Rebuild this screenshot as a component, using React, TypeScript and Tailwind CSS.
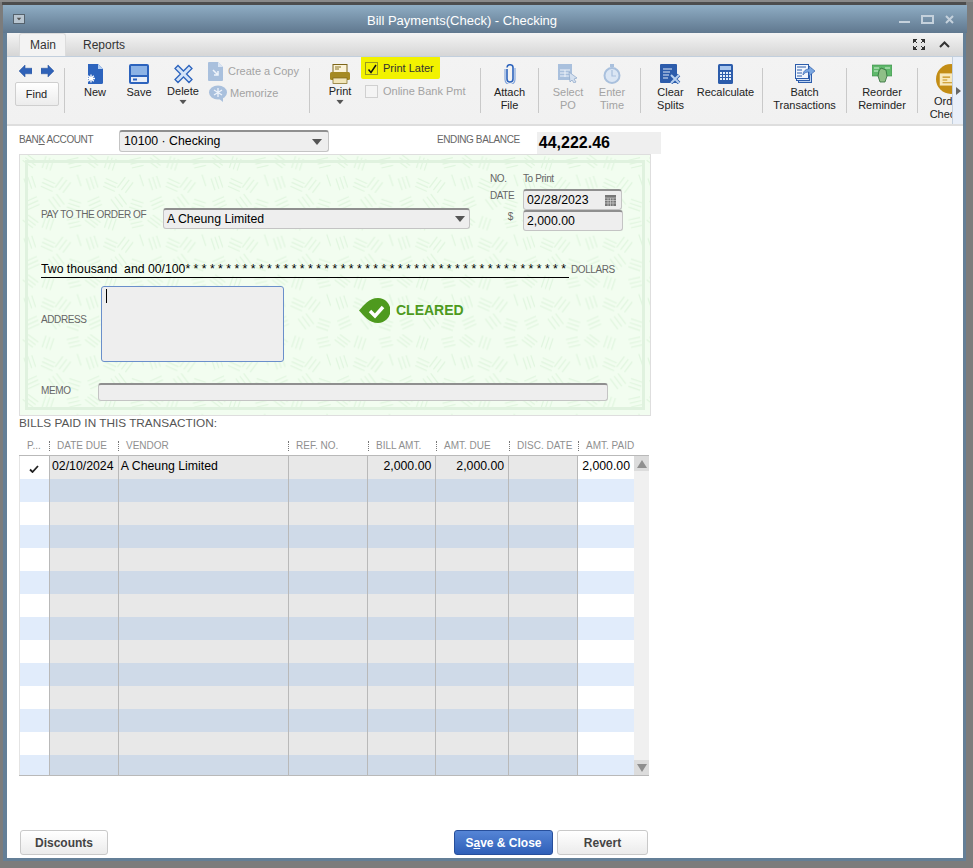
import type { ReactNode } from "react"

const font = "font-['Liberation_Sans',Arial,sans-serif]"

const Caret = ({ className = "" }: { className?: string }) => (
  <svg width="10" height="6" viewBox="0 0 10 6" className={className}>
    <path d="M0 0h10L5 6z" fill="#555" />
  </svg>
)

const NavArrow = ({ dir }: { dir: "left" | "right" }) => (
  <svg width="13" height="12" viewBox="0 0 14 13">
    <path
      d={dir === "left" ? "M0 6.5 6.5 0v3.5H14v6H6.5V13z" : "M14 6.5 7.5 0v3.5H0v6h7.5V13z"}
      fill="#2f62b8"
      stroke="#1d4a96"
      strokeWidth=".5"
    />
  </svg>
)

const NewIcon = () => (
  <svg width="18" height="20" viewBox="0 0 18 20">
    <path d="M2 0h10l5 5v13.500a1.500 1.500 0 0 1-1.500 1.500H2z" fill="#2c63bd" />
    <path d="M12 0l5 5h-5z" fill="#b5cff1" />
    <path d="M5 10.500v8M1 14.500h8M2.200 11.700l5.600 5.600M7.800 11.700l-5.600 5.600" stroke="#fff" strokeWidth="1.300" />
  </svg>
)

const SaveIcon = () => (
  <svg width="20" height="20" viewBox="0 0 20 20">
    <rect width="20" height="20" rx="2" fill="#2c63bd" />
    <rect x="2" y="2" width="16" height="9" fill="#8cb3e6" />
    <rect x="2" y="13" width="16" height="5" fill="#e8eef8" />
    <rect x="4" y="14.500" width="4" height="2" fill="#2c63bd" />
  </svg>
)

const DeleteIcon = () => (
  <svg width="21" height="20" viewBox="0 0 20 20">
    <path
      d="M1.500 4.500 4.500 1.500 10 7 15.500 1.500 18.500 4.500 13 10 18.500 15.500 15.500 18.500 10 13 4.500 18.500 1.500 15.500 7 10z"
      fill="#d3e3f8"
      stroke="#2c63bd"
      strokeWidth="1.300"
    />
  </svg>
)

const CopyIcon = () => (
  <svg width="16" height="19" viewBox="0 0 16 19">
    <path d="M1 0h9l5 5v13a1 1 0 0 1-1 1H1a1 1 0 0 1-1-1V1a1 1 0 0 1 1-1z" fill="#a9c0dd" />
    <path d="M10 0l5 5h-5z" fill="#dbe6f4" />
    <path d="M5 8l5 5M10 9v4H6" stroke="#eef3fa" strokeWidth="1.500" fill="none" />
  </svg>
)

const MemorizeIcon = () => (
  <svg width="18" height="17" viewBox="0 0 18 17">
    <ellipse cx="9" cy="7.500" rx="9" ry="7" fill="#a9c0dd" />
    <path d="M9 13l5 4v-5z" fill="#a9c0dd" />
    <path d="M9 3v9M5 5l8 5M13 5l-8 5" stroke="#eef3fa" strokeWidth="1.300" />
  </svg>
)

const PrintIcon = () => (
  <svg width="20" height="20" viewBox="0 0 20 20">
    <rect x="3" y="0.500" width="14" height="8" fill="#fbf3d8" stroke="#7d6518" />
    <path d="M5 3h6M5 5h4" stroke="#8a7427" />
    <rect x="0" y="8" width="20" height="8" rx="1.500" fill="#a58a22" />
    <rect x="3" y="14" width="14" height="5.500" fill="#f2e6ba" stroke="#7d6518" strokeWidth=".7" />
  </svg>
)

const ClipIcon = () => (
  <svg width="12" height="20" viewBox="0 0 12 20">
    <path d="M3 5v10a3 3 0 0 0 6 0V4a3 3 0 0 0-6-.5" fill="none" stroke="#2c63bd" strokeWidth="1.600" />
    <path d="M1 5v10.500a5 5 0 0 0 10 0V4" fill="none" stroke="#7ba0da" strokeWidth="1.100" />
  </svg>
)

const SelectPoIcon = () => (
  <svg width="20" height="19" viewBox="0 0 20 19">
    <rect width="14" height="16" fill="#a9c0dd" />
    <path d="M2 6h10M2 9h10M2 12h10M7 6v7" stroke="#eef3fa" />
    <path d="M11 8l8 6-3 1 2 3-2 1-2-3-2 2z" fill="#d5e1f0" stroke="#8aa5c7" strokeWidth=".7" />
  </svg>
)

const EnterTimeIcon = () => (
  <svg width="18" height="20" viewBox="0 0 18 20">
    <rect x="7" y="0" width="4" height="3" fill="#a9c0dd" />
    <circle cx="9" cy="11.500" r="7.500" fill="#dbe6f4" stroke="#a9c0dd" strokeWidth="2" />
    <path d="M9 6v6h4" stroke="#a9c0dd" strokeWidth="1.200" fill="none" />
  </svg>
)

const ClearSplitsIcon = () => (
  <svg width="21" height="20" viewBox="0 0 21 20">
    <rect width="17" height="19" rx="1" fill="#2c5cab" />
    <path d="M3 5h9M3 8h7M3 11h6M3 14h5" stroke="#dde8f7" strokeWidth="1.200" />
    <path d="M11 11l8 8M19 11l-8 8" stroke="#2c5cab" strokeWidth="3.600" />
    <path d="M11 11l8 8M19 11l-8 8" stroke="#b7d0ef" strokeWidth="2" />
  </svg>
)

const CalcIcon = () => (
  <svg width="15" height="20" viewBox="0 0 15 20">
    <rect width="15" height="20" rx="1.500" fill="#2c5cab" />
    <rect x="2" y="2" width="11" height="4" fill="#a8c6ee" />
    <path
      d="M2 8h2v2H2zM5 8h2v2H5zM8 8h2v2H8zM11 8h2v2h-2zM2 11h2v2H2zM5 11h2v2H5zM8 11h2v2H8zM11 11h2v2h-2zM2 14h2v2H2zM5 14h2v2H5zM8 14h2v2H8zM11 14h2v2h-2z"
      fill="#e3edf9"
    />
  </svg>
)

const BatchIcon = () => (
  <svg width="20" height="19" viewBox="0 0 20 19">
    <rect x="3.500" y="4.500" width="13" height="14" fill="#bcd2ef" stroke="#2c5cab" />
    <rect x="1.500" y="2.500" width="13" height="14" fill="#dbe7f7" stroke="#2c5cab" />
    <rect x="0.500" y="0.500" width="13" height="14" fill="#f2f6fc" stroke="#2c5cab" />
    <path d="M2 3h9M2 6h5M2 9h5M2 12h5" stroke="#2c5cab" />
    <path d="M8 11c0-4 3-6 6-6V2l6 5-6 5V8c-3 0-5 1-6 3z" fill="#7ba7e0" stroke="#2c5cab" strokeWidth=".6" />
  </svg>
)

const ReorderIcon = () => (
  <svg width="20" height="19" viewBox="0 0 20 19">
    <rect x="0" y="1" width="20" height="11" fill="#5fb86b" stroke="#3b8a48" strokeWidth=".6" />
    <path d="M2 4h5M2 7h4M13 4h5" stroke="#d3f0d6" />
    <path d="M7 7l2-3 5 2 1 6-2 6H8L6 12z" fill="#8fbf87" stroke="#2e6d38" strokeWidth=".8" />
  </svg>
)

const OrderIcon = () => (
  <svg width="30" height="30" viewBox="0 0 32 32">
    <circle cx="16" cy="16" r="16" fill="#c38d15" />
    <rect x="4" y="10" width="24" height="13" fill="#f8e9bd" />
    <path d="M7 14h8M7 17h5M17 17h11M7 20h16" stroke="#c38d15" strokeWidth="1.200" />
  </svg>
)

const ToolButton = ({
  icon,
  lines,
  width,
  disabled,
  caret,
}: {
  icon: ReactNode
  lines: string[]
  width: string
  disabled?: boolean
  caret?: boolean
}) => (
  <div className={`${width} shrink-0 flex flex-col items-center pt-[6px]`}>
    <div className="h-[21px] flex items-center justify-center">{icon}</div>
    <div
      className={`${caret ? "mt-[1px]" : "mt-[2px]"} text-center text-[11px] leading-[13px] whitespace-nowrap ${
        disabled ? "text-[#a3a3a3]" : "text-[#222]"
      }`}
    >
      {lines.map((l) => (
        <div key={l}>{l}</div>
      ))}
    </div>
    {caret && <Caret className="mt-[1px] scale-75" />}
  </div>
)

const Sep = () => <div className="w-px h-[45px] mt-[11px] bg-[#c9c9c9] shrink-0" />

const hatch = [
  "M2 4l8 6", "M4 2l8 6", "M6 0l8 6", "M20 1l-3 9", "M23 2l-3 9", "M26 3l-3 9",
  "M36 4l9-2", "M37 7l9-2", "M38 10l9-2", "M3 18l3 9", "M6 17l3 9", "M9 16l3 9",
  "M18 18l9 4", "M17 21l9 4", "M16 24l9 4", "M33 17l-6 8", "M36 19l-6 8", "M39 21l-6 8",
  "M44 15l3 9", "M4 36l9-4", "M5 39l9-4", "M6 42l9-4", "M22 34l6 8", "M25 32l6 8",
  "M28 30l6 8", "M38 34l9 3", "M37 37l9 3", "M36 40l9 3",
]

const CheckPattern = () => (
  <svg className="absolute inset-0 w-full h-full" aria-hidden="true">
    <defs>
      <pattern id="chk" width="48" height="46" patternUnits="userSpaceOnUse" patternTransform="scale(1.3)">
        {hatch.map((d) => (
          <path key={d} d={d} stroke="#e0f5de" strokeWidth=".9" fill="none" />
        ))}
      </pattern>
    </defs>
    <rect width="100%" height="100%" fill="#f2fdf0" />
    <rect width="100%" height="100%" fill="url(#chk)" />
  </svg>
)

const fieldCls =
  "rounded-[3px] bg-[#eeeeee] border border-[#c4c4c4] border-t-[#8f8f8f] border-t-2 flex items-center text-[12.3px] text-black"

const Label = ({ children, className = "" }: { children: ReactNode; className?: string }) => (
  <div className={`text-[10px] tracking-[-0.4px] leading-[12px] text-[#666] whitespace-nowrap ${className}`}>{children}</div>
)

const cols = [
  { w: "w-[30px]", head: "P...", pad: "pl-[8px]" },
  { w: "w-[69px]", head: "DATE DUE", pad: "pl-[7px]" },
  { w: "w-[170px]", head: "VENDOR", pad: "pl-[7px]" },
  { w: "w-[80px]", head: "REF. NO.", pad: "pl-[7px]" },
  { w: "w-[68px]", head: "BILL AMT.", pad: "pl-[7px]" },
  { w: "w-[73px]", head: "AMT. DUE", pad: "pl-[7px]" },
  { w: "w-[69px]", head: "DISC. DATE", pad: "pl-[7px]" },
  { w: "w-[56px]", head: "AMT. PAID", pad: "pl-[7px]" },
]

const rows = Array.from({ length: 14 }, (_, i) => i)

const GridRow = ({ i }: { i: number }) => {
  const odd = i % 2 === 1
  const side = odd ? "bg-[#e1ecfb]" : "bg-white"
  const mid = odd ? "bg-[#cfdae8]" : "bg-[#e8e8e8]"
  const first = i === 0
  return (
    <div className="flex h-[23px] shrink-0 text-[12.3px] leading-[18px] text-black">
      <div className={`w-[30px] border-r border-[#b9b9b9] flex items-center justify-center ${side}`}>
        {first && (
          <svg width="10" height="8" viewBox="0 0 10 8" className="mt-[3px]">
            <path d="M1 4.500 3.500 7 9 1" fill="none" stroke="#222" strokeWidth="1.800" />
          </svg>
        )}
      </div>
      <div className={`w-[69px] border-r border-[#b9b9b9] pl-[2px] pt-[1px] ${mid}`}>{first && "02/10/2024"}</div>
      <div className={`w-[170px] border-r border-[#b9b9b9] pl-[2px] pt-[1px] ${mid}`}>{first && "A Cheung Limited"}</div>
      <div className={`w-[80px] border-r border-[#b9b9b9] ${mid}`} />
      <div className={`w-[68px] border-r border-[#b9b9b9] pr-[4px] pt-[1px] text-right ${mid}`}>{first && "2,000.00"}</div>
      <div className={`w-[73px] border-r border-[#b9b9b9] pr-[4px] pt-[1px] text-right ${mid}`}>{first && "2,000.00"}</div>
      <div className={`w-[69px] border-r border-[#b9b9b9] ${mid}`} />
      <div className={`w-[56px] pr-[4px] pt-[1px] text-right ${side}`}>{first && "2,000.00"}</div>
    </div>
  )
}

const stars = "* ".repeat(46).trim()

export default function App() {
  return (
    <div className={`${font} w-[973px] h-[868px] bg-[#7c7c7c] overflow-hidden`}>
      <div className="h-[2px] bg-[#8a8a8a]" />
      <div className="h-[3px] bg-[#4d4d4d] ml-[2px] mr-[7px]" />
      <div className="ml-[3px] mr-[7px] h-[856px] px-[4px] pr-[3px] pb-[3px] bg-[#647f97] flex flex-col">
        <div className="h-[28px] -mx-[4px] px-[10px] shrink-0 bg-gradient-to-b from-[#8fadc4] to-[#60788f] flex items-center">
          <div className="w-[12px] h-[10px] bg-[#b8c5d0] border border-[#55626d] flex items-center justify-center">
            <Caret className="scale-50" />
          </div>
          <div className="flex-1 text-center text-[13px] text-white pl-[2px] pt-[3px] -ml-[2px]">
            Bill Payments(Check) - Checking
          </div>
          <div className="flex items-center gap-[11px] mr-[3px]">
            <div className="w-[11px] h-[2px] mt-[6px] bg-[#c5d1dc]" />
            <div className="w-[13px] h-[9px] border-2 border-[#c5d1dc]" />
            <svg width="9" height="9" viewBox="0 0 9 9">
              <path d="M1 1l7 7M8 1 1 8" stroke="#c5d1dc" strokeWidth="2" />
            </svg>
          </div>
        </div>

        <div className="flex-1 bg-white flex flex-col min-h-0">
          <div className="h-[24px] shrink-0 bg-gradient-to-b from-[#f4f4f4] to-[#d6d6d6] border-b border-[#c2cfdd] flex items-end pl-[12px] text-[12px] text-[#333]">
            <div className="w-[47px] h-[23px] bg-[#f3f3f3] border border-b-0 border-[#dcdcdc] rounded-t-[3px] flex items-center justify-center pl-[1px]">
              Main
            </div>
            <div className="ml-[17px] h-[23px] flex items-center">Reports</div>
            <div className="ml-auto mr-[13px] h-[23px] flex items-center gap-[14px]">
              <svg width="12" height="11" viewBox="0 0 12 11">
                <path d="M0 0h4L0 4zM12 0H8l4 4zM0 11h4L0 7zM12 11H8l4-4zM2 2l2 2M10 2 8 4M2 9l2-2M10 9 8 7" fill="#333" stroke="#333" />
              </svg>
              <svg width="11" height="7" viewBox="0 0 11 7">
                <path d="M1 6l4.500-4.500L10 6" fill="none" stroke="#333" strokeWidth="2" />
              </svg>
            </div>
          </div>

          <div className="h-[69px] shrink-0 bg-gradient-to-b from-[#f3f3f3] to-[#f1f1f1] border-b-2 border-[#dedede] flex relative overflow-hidden">
            <div className="w-[57px] shrink-0 flex flex-col items-center pt-[8px] pl-[2px]">
              <div className="flex gap-[9px] pr-[1px]">
                <NavArrow dir="left" />
                <NavArrow dir="right" />
              </div>
              <div className="mt-[5px] w-[44px] h-[24px] bg-gradient-to-b from-white to-[#ececec] border border-[#cfcfcf] rounded-[2px] flex items-center justify-center text-[11px] text-[#222]">
                Find
              </div>
            </div>
            <Sep />
            <ToolButton icon={<NewIcon />} lines={["New"]} width="w-[44px] ml-[8px]" />
            <ToolButton icon={<SaveIcon />} lines={["Save"]} width="w-[44px]" />
            <ToolButton icon={<DeleteIcon />} lines={["Delete"]} width="w-[44px]" caret />
            <div className="w-[104px] shrink-0 pt-[4px] pl-[3px] text-[11px] text-[#a3a3a3] flex flex-col gap-[2px]">
              <div className="flex items-center gap-[4px] h-[20px]">
                <CopyIcon />
                Create a Copy
              </div>
              <div className="flex items-center gap-[3px] h-[20px] pl-[1px]">
                <MemorizeIcon />
                Memorize
              </div>
            </div>
            <Sep />
            <ToolButton icon={<PrintIcon />} lines={["Print"]} width="w-[60px]" caret />
            <div className="w-[110px] shrink-0 pt-[2px] flex flex-col text-[11px]">
              <div className="w-[79px] h-[23px] -ml-[9px] pl-[4px] pt-[2px] bg-[#f2f200] rounded-[2px] flex items-center gap-[5px] text-[#333] mt-[-3px] mb-[1px]">
                <span className="w-[13px] h-[13px] border border-[#9a9a20] flex items-center justify-center">
                  <svg width="10" height="10" viewBox="0 0 10 10">
                    <path d="M1.500 5.500 4 8.500 9 1" fill="none" stroke="#111" strokeWidth="1.500" />
                  </svg>
                </span>
                Print Later
              </div>
              <div className="mt-[3px] -ml-[5px] flex items-center gap-[5px] text-[#a3a3a3]">
                <span className="w-[13px] h-[13px] border border-[#d0d0d0] bg-[#f4f4f4]" />
                Online Bank Pmt
              </div>
            </div>
            <Sep />
            <ToolButton icon={<ClipIcon />} lines={["Attach", "File"]} width="w-[57px]" />
            <Sep />
            <ToolButton icon={<SelectPoIcon />} lines={["Select", "PO"]} width="w-[58px]" disabled />
            <ToolButton icon={<EnterTimeIcon />} lines={["Enter", "Time"]} width="w-[30px] mr-[13px]" disabled />
            <Sep />
            <ToolButton icon={<ClearSplitsIcon />} lines={["Clear", "Splits"]} width="w-[59px]" />
            <ToolButton icon={<CalcIcon />} lines={["Recalculate"]} width="w-[51px] mr-[11px]" />
            <Sep />
            <ToolButton icon={<BatchIcon />} lines={["Batch", "Transactions"]} width="w-[83px]" />
            <Sep />
            <ToolButton icon={<ReorderIcon />} lines={["Reorder", "Reminder"]} width="w-[70px]" />
            <Sep />
            <div className="flex flex-col items-center pt-[7px] w-[60px] shrink-0 text-[11px] leading-[13px] text-[#222] text-center">
              <div className="ml-[6px] h-[30px]">
                <OrderIcon />
              </div>
              <div className="mt-[1px]">Order</div>
              <div>Checks</div>
            </div>
            <div className="absolute right-0 top-0 bottom-[0px] w-[11px] bg-[#e9eff9] border-l border-[#c2cfdd] flex items-center justify-center">
              <svg width="5" height="8" viewBox="0 0 5 8">
                <path d="M0 0l5 4-5 4z" fill="#666" />
              </svg>
            </div>
          </div>

          <div className="flex-1 flex flex-col pl-[12px] min-h-0">
            <div className="h-[28px] shrink-0 flex items-start">
              <Label className="w-[100px] mt-[8px]">
                BAN<span className="underline">K</span> ACCOUNT
              </Label>
              <div className={`${fieldCls} w-[210px] h-[22px] mt-[4px] pl-[4px] justify-between pr-[6px]`}>
                10100 · Checking
                <Caret />
              </div>
              <Label className="ml-[108px] mt-[8px]">ENDING BALANCE</Label>
              <div className="ml-[17px] mt-[6px] w-[124px] h-[22px] bg-[#efefef] pl-[2px] text-[16px] leading-[22px] font-bold text-black">
                44,222.46
              </div>
            </div>

            <div className="w-[632px] h-[262px] shrink-0 border border-[#dedede] relative p-[5px]">
              <CheckPattern />
              <div className="relative h-full border-[3px] border-[#e0f2df] pl-[13px] pt-[10px]">
                <div className="flex h-[67px]">
                  <div className="flex items-center w-[122px] pt-[17px]">
                    <Label>PAY TO THE ORDER OF</Label>
                  </div>
                  <div className="w-[307px] mt-[35px] h-[21px]">
                    <div className={`${fieldCls} h-[21px] pl-[3px] pr-[4px] justify-between`}>
                      A Cheung Limited
                      <Caret />
                    </div>
                  </div>
                  <div className="ml-[20px] w-[33px]">
                    <Label>NO.</Label>
                    <Label className="mt-[5px]">DATE</Label>
                    <Label className="mt-[9px] text-right pr-[10px]">$</Label>
                  </div>
                  <div className="w-[100px]">
                    <Label className="mb-[2px]">To Print</Label>
                    <div className={`${fieldCls} w-[99px] h-[21px] mt-[4px] pl-[3px] pr-[5px] justify-between`}>
                      02/28/2023
                      <svg width="11" height="11" viewBox="0 0 11 11">
                        <rect width="11" height="11" fill="#777" />
                        <path d="M0 3h11M0 5.500h11M0 8h11M3 3v8M5.500 3v8M8 3v8" stroke="#ddd" strokeWidth=".6" />
                      </svg>
                    </div>
                    <div className={`${fieldCls} w-[100px] h-[21px] pl-[3px]`}>2,000.00</div>
                  </div>
                </div>

                <div className="flex items-end mt-[16px] h-[22px]">
                  <div className="w-[528px] border-b border-black text-[12.25px] leading-[15px] text-black whitespace-nowrap overflow-hidden h-[16px]">
                    Two thousand&nbsp; and 00/100* {stars}
                  </div>
                  <Label className="ml-[2px] pb-[2px]">DOLLARS</Label>
                </div>

                <div className="flex mt-[8px] h-[76px]">
                  <Label className="w-[60px] mt-[28px]">ADDRESS</Label>
                  <div className="w-[183px] h-[76px] bg-[#eeeeee] border border-[#6a8fcb] rounded-[3px] pl-[4px] pt-[2px]">
                    <div className="w-px h-[14px] bg-black" />
                  </div>
                  <div className="ml-[75px] mt-[12px] flex items-center gap-[6px] h-[25px]">
                    <svg width="31" height="25" viewBox="0 0 31 25">
                      <path d="M0 12.500C5 7 10 0 19 0a12.500 12.500 0 0 1 0 25C10 25 5 18 0 12.500z" fill="#4e9a1e" />
                      <path d="M11 13l5 5 8-9" fill="none" stroke="#fff" strokeWidth="3.400" />
                    </svg>
                    <span className="text-[14px] font-bold text-[#4e9a1e]">CLEARED</span>
                  </div>
                </div>

                <div className="flex items-center mt-[21px]">
                  <Label className="w-[57px] mt-[-2px]">MEMO</Label>
                  <div className={`${fieldCls} w-[510px] h-[18px]`} />
                </div>
              </div>
            </div>

            <div className="text-[11.8px] leading-[14px] text-[#555] h-[14px] shrink-0">
              BILLS PAID IN THIS TRANSACTION:
            </div>

            <div className="flex h-[25px] shrink-0 items-center pt-[6px]">
              {cols.map((c, i) => (
                <div
                  key={c.head}
                  className={`${c.w} ${c.pad} shrink-0 text-[10px] text-[#8f8f8f] whitespace-nowrap h-[10px] leading-[10px] ${
                    i > 0 ? "border-l border-dotted border-[#777]" : ""
                  }`}
                >
                  {c.head}
                </div>
              ))}
            </div>

            <div className="flex w-[630px] h-[321px] shrink-0 border-t border-b border-[#b9b9b9]">
              <div className="w-[615px] flex flex-col overflow-hidden border-l border-[#e4e4e4]">
                {rows.map((i) => (
                  <GridRow key={i} i={i} />
                ))}
              </div>
              <div className="w-[15px] bg-[#f0f0f0] flex flex-col justify-between">
                <div className="h-[15px] bg-[#dcdcdc] flex items-center justify-center">
                  <svg width="10" height="8" viewBox="0 0 10 8">
                    <path d="M5 0l5 8H0z" fill="#8f8f8f" />
                  </svg>
                </div>
                <div className="h-[15px] bg-[#dcdcdc] flex items-center justify-center">
                  <svg width="10" height="8" viewBox="0 0 10 8">
                    <path d="M5 8l5-8H0z" fill="#8f8f8f" />
                  </svg>
                </div>
              </div>
            </div>

            <div className="flex-1 flex items-end pb-[3px] pl-[1px] text-[12px] font-bold">
              <button className="w-[88px] h-[25px] bg-gradient-to-b from-white to-[#ebebeb] border border-[#c9c9c9] rounded-[3px] text-[#444]">
                Discounts
              </button>
              <button className="ml-[346px] w-[99px] h-[25px] bg-gradient-to-b from-[#5585d6] to-[#2f5fb8] border border-[#274f9b] rounded-[3px] text-white">
                S<span className="underline">a</span>ve &amp; Close
              </button>
              <button className="ml-[4px] w-[91px] h-[25px] bg-gradient-to-b from-white to-[#ebebeb] border border-[#c9c9c9] rounded-[3px] text-[#444]">
                Revert
              </button>
            </div>
          </div>
        </div>
      </div>
    </div>
  )
}
